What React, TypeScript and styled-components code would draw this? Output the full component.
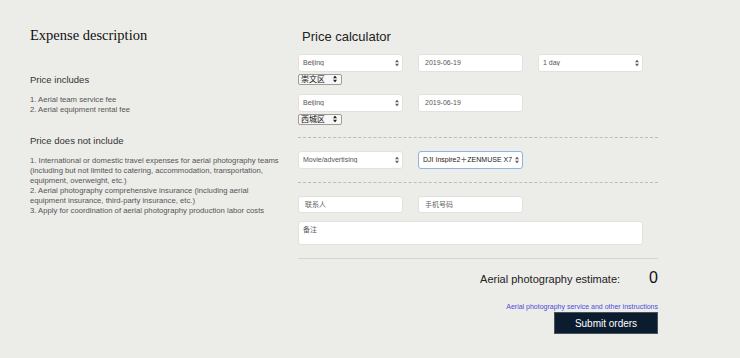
import styled, { createGlobalStyle } from "styled-components";

const GlobalStyle = createGlobalStyle`
	html, body {
		margin: 0;
		padding: 0;
		background: #ecece9;
	}
	body {
		font-family: "Liberation Sans", "Noto Sans CJK SC", Arial, sans-serif;
	}
	#root {
		min-height: 358px;
	}
`;

const Page = styled.div`
	display: flex;
	align-items: flex-start;
	padding-left: 30px;
	min-height: 358px;
	box-sizing: border-box;
`;

const LeftCol = styled.div`
	width: 268px;
	padding-top: 27px;
`;

const MainTitle = styled.h1`
	margin: 0;
	font-family: "Liberation Serif", "Times New Roman", serif;
	font-size: 14.5px;
	line-height: 16px;
	font-weight: normal;
	color: #111;
`;

const Block = styled.div<{ $top: number }>`
	margin-top: ${(p) => p.$top}px;
`;

const SubTitle = styled.h3`
	margin: 0 0 9px;
	font-size: 9.5px;
	line-height: 12px;
	font-weight: normal;
	color: #333;
`;

const Note = styled.p`
	margin: 0;
	font-size: 7.7px;
	line-height: 10px;
	color: #555;
	white-space: nowrap;
`;

const RightCol = styled.div`
	width: 360px;
	padding-top: 29px;
`;

const CalcTitle = styled.h2`
	margin: 0 0 8.5px 4px;
	font-size: 13px;
	line-height: 16px;
	font-weight: normal;
	color: #222;
`;

const Section = styled.div<{ $solid?: boolean; $first?: boolean }>`
	display: flex;
	flex-direction: column;
	padding: ${(p) => (p.$first ? "0 0 12px" : "13px 0")};
	border-bottom: 1px ${(p) => (p.$solid ? "solid #d3d3d0" : "dashed #bcbcb9")};
`;

const Rows = styled.div<{ $gap: number }>`
	display: flex;
	flex-direction: column;
	gap: ${(p) => p.$gap}px;
`;

const Row = styled.div`
	display: flex;
	align-items: flex-start;
	gap: 15px;
`;

const FieldStack = styled.div`
	display: flex;
	flex-direction: column;
	gap: 2px;
`;

const SelectShell = styled.div<{ $mini?: boolean }>`
	position: relative;
	width: ${(p) => (p.$mini ? 44 : 105)}px;
	height: ${(p) => (p.$mini ? 11 : 18)}px;
`;

const NativeSelect = styled.select<{ $focus?: boolean }>`
	appearance: none;
	-webkit-appearance: none;
	display: block;
	margin: 0;
	width: 100%;
	height: 100%;
	box-sizing: border-box;
	padding: 0 10px 0 4px;
	border: 1px solid ${(p) => (p.$focus ? "#8db3e7" : "#e1e1de")};
	border-radius: 3px;
	background: #fff;
	font-family: "Liberation Sans", "Noto Sans CJK SC", sans-serif;
	font-size: 7px;
	color: ${(p) => (p.$focus ? "#222" : "#555")};
	outline: none;
`;

const MiniSelect = styled(NativeSelect)`
	padding: 0 8px 0 2px;
	border: 1px solid #9c9c9a;
	border-radius: 2px;
	background: #f7f7f6;
	font-family: "Liberation Sans", "Noto Sans CJK SC", sans-serif;
	font-size: 8px;
	line-height: 9px;
	color: #111;
`;

const ArrowSlot = styled.span<{ $mini?: boolean }>`
	position: absolute;
	right: ${(p) => (p.$mini ? 5 : 4)}px;
	top: 50%;
	transform: translateY(-50%);
	display: flex;
	pointer-events: none;
`;

const TextInput = styled.input<{ $h?: number }>`
	display: block;
	margin: 0;
	width: 105px;
	height: ${(p) => p.$h ?? 18}px;
	box-sizing: border-box;
	padding: 0 6px;
	border: 1px solid #e1e1de;
	border-radius: 3px;
	background: #fff;
	font-family: "Liberation Sans", "Noto Sans CJK SC", sans-serif;
	font-size: 7px;
	color: #555;
	outline: none;

	&::placeholder {
		color: #666;
		font-family: "Noto Sans CJK SC", sans-serif;
	}
`;

const NoteArea = styled.textarea`
	display: block;
	margin: 8.5px 0 0;
	width: 345px;
	height: 24px;
	box-sizing: border-box;
	padding: 2px 4px;
	border: 1px solid #e1e1de;
	border-radius: 3px;
	background: #fff;
	resize: none;
	font-family: "Noto Sans CJK SC", sans-serif;
	font-size: 7px;
	line-height: 10px;
	outline: none;

	&::placeholder {
		color: #666;
	}
`;

const Summary = styled.div`
	display: flex;
	flex-direction: column;
	align-items: flex-end;
	padding-top: 9px;
`;

const EstimateRow = styled.div`
	display: flex;
	align-items: baseline;
	line-height: 20px;
`;

const EstimateLabel = styled.span`
	font-size: 11px;
	color: #222;
`;

const EstimateValue = styled.span`
	margin-left: 29px;
	font-size: 16px;
	color: #111;
`;

const InfoLink = styled.a`
	margin-top: 12.5px;
	font-size: 7px;
	line-height: 9px;
	color: #4d4ddb;
	text-decoration: none;
`;

const SubmitButton = styled.button`
	margin-top: 1.5px;
	width: 104px;
	height: 22px;
	padding: 0;
	border: 1px solid #46525e;
	background: #0b1c2f;
	color: #fff;
	font-family: "Liberation Sans", sans-serif;
	font-size: 10px;
	cursor: pointer;
`;

const Arrows = ({ color = "#666" }: { color?: string }) => (
	<svg width="4" height="7" viewBox="0 0 4 7">
		<path d="M2 0 L4 2.7 H0 Z M0 4.3 H4 L2 7 Z" fill={color} />
	</svg>
);

const Select = ({
	options,
	focus,
}: {
	options: string[];
	focus?: boolean;
}) => (
	<SelectShell>
		<NativeSelect $focus={focus} defaultValue={options[0]}>
			{options.map((o) => (
				<option key={o}>{o}</option>
			))}
		</NativeSelect>
		<ArrowSlot>
			<Arrows />
		</ArrowSlot>
	</SelectShell>
);

const DistrictSelect = ({ options }: { options: string[] }) => (
	<SelectShell $mini>
		<MiniSelect defaultValue={options[0]}>
			{options.map((o) => (
				<option key={o}>{o}</option>
			))}
		</MiniSelect>
		<ArrowSlot $mini>
			<Arrows color="#222" />
		</ArrowSlot>
	</SelectShell>
);

const cities = ["Beijing", "Shanghai", "Guangzhou"];

export default function App() {
	return (
		<>
			<GlobalStyle />
			<Page>
				<LeftCol>
					<MainTitle>Expense description</MainTitle>
					<Block $top={31}>
						<SubTitle>Price includes</SubTitle>
						<Note>
							1. Aerial team service fee
							<br />
							2. Aerial equipment rental fee
						</Note>
					</Block>
					<Block $top={20}>
						<SubTitle>Price does not include</SubTitle>
						<Note>
							1. International or domestic travel expenses for aerial photography teams
							<br />
							(including but not limited to catering, accommodation, transportation,
							<br />
							equipment, overweight, etc.)
							<br />
							2. Aerial photography comprehensive insurance (including aerial
							<br />
							equipment insurance, third-party insurance, etc.)
							<br />
							3. Apply for coordination of aerial photography production labor costs
						</Note>
					</Block>
				</LeftCol>

				<RightCol>
					<CalcTitle>Price calculator</CalcTitle>
					<Section $first>
						<Rows $gap={9}>
							<Row>
								<FieldStack>
									<Select options={cities} />
									<DistrictSelect options={["崇文区", "东城区", "西城区"]} />
								</FieldStack>
								<TextInput type="text" defaultValue="2019-06-19" />
								<Select options={["1 day", "2 days", "3 days"]} />
							</Row>
							<Row>
								<FieldStack>
									<Select options={cities} />
									<DistrictSelect options={["西城区", "东城区", "崇文区"]} />
								</FieldStack>
								<TextInput type="text" defaultValue="2019-06-19" />
							</Row>
						</Rows>
					</Section>
					<Section>
						<Row>
							<Select options={["Movie/advertising", "Event", "Real estate"]} />
							<Select options={["DJI Inspire2＋ZENMUSE X7", "DJI M600 Pro"]} focus />
						</Row>
					</Section>
					<Section $solid>
						<Row>
							<TextInput type="text" placeholder="联系人" $h={17} />
							<TextInput type="text" placeholder="手机号码" $h={17} />
						</Row>
						<NoteArea placeholder="备注" />
					</Section>
					<Summary>
						<EstimateRow>
							<EstimateLabel>Aerial photography estimate:</EstimateLabel>
							<EstimateValue>0</EstimateValue>
						</EstimateRow>
						<InfoLink href="#">Aerial photography service and other instructions</InfoLink>
						<SubmitButton type="button">Submit orders</SubmitButton>
					</Summary>
				</RightCol>
			</Page>
		</>
	);
}
